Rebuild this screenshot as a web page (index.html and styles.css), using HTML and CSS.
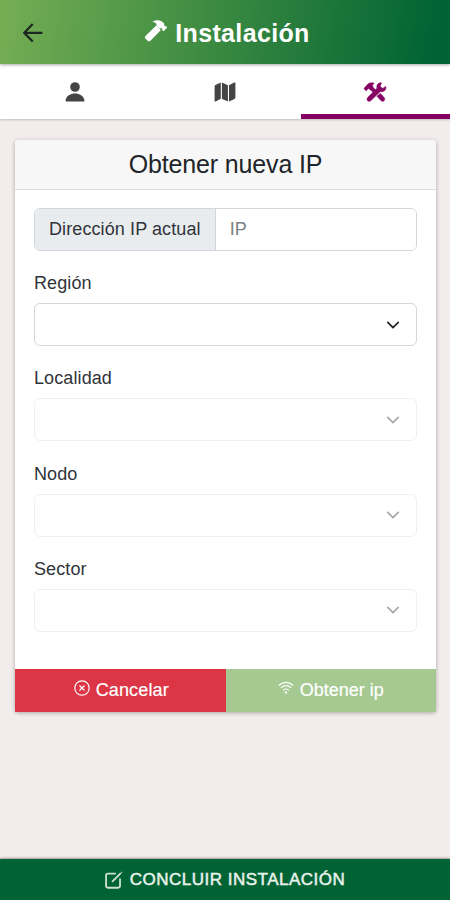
FILE: index.html
```html
<!DOCTYPE html>
<html lang="es">
<head>
    <meta charset="UTF-8">
    <meta name="viewport" content="width=device-width, initial-scale=1.0">
    <title>Instalación</title>
    <link rel="stylesheet" href="styles.css">
</head>
<body>
    <header>
        <button class="back" aria-label="Volver">
            <svg width="20" height="20" viewBox="0 0 20 20"><path d="M9.7 1 1.2 9.8l8.500 8.700M1.500 9.800H19.400"/></svg>
        </button>
        <h1>
            <svg width="24" height="24" viewBox="0 0 24 24"><path d="M8.400 2.800C11 .9 15 .8 17.500 2.200L20.200 4.500V6.600L21 7.300 22 7.100 23.200 8.500 19.600 12.300 18 10.900 18.300 10 17.200 8.900 15.600 9.500 12.500 6.800V4.900C11.500 3.700 10.200 3.100 8.400 2.800Z"/><path d="M12.300 6.500 16.900 11 6.500 21.700C5.300 22.700 4.300 22.600 3.300 21.600L1.500 19.800C.6 18.800.6 17.700 1.700 16.700Z"/></svg>
            <span>Instalación</span>
        </h1>
    </header>

    <nav class="tabs">
        <button aria-label="Cliente">
            <svg width="20" height="22" viewBox="0 0 20 22"><circle cx="10" cy="6" r="4.800"/><path d="M1.700 20.500C.8 20.500.4 19.800.6 18.900 1.500 14.900 5.500 12.600 10 12.600s8.500 2.300 9.400 6.300c.2.9-.2 1.600-1.100 1.600Z"/></svg>
        </button>
        <button aria-label="Mapa">
            <svg width="22" height="22" viewBox="0 0 22 22"><path d="M6.800 1.500V17.800L1.700 20.500C1 20.800.6 20.500.6 19.900V5.500C.6 4.800.9 4.300 1.500 4ZM7.900 1.500 13.900 4.200V20.500L7.900 17.800ZM15 4.200 20.200 1.600C20.900 1.300 21.400 1.600 21.400 2.300V16.600C21.400 17.200 21.100 17.700 20.500 18L15 20.500Z"/></svg>
        </button>
        <button class="active" aria-label="Herramientas">
            <svg width="24" height="22" viewBox="0 0 24 22"><path d="M.9 7.500 3.800 4.300C5.500 2 8 1.300 11 2.200L9.300 4.600 10.200 6.500 12.800 9.200 10.500 11.500 7.500 9 5.600 7.600 4.400 8.200 3.300 9.900Z"/><path d="M18.500 1.900 17 5.200 19.600 7.400 22.800 5.500C23.400 9.200 20.700 11.300 17.300 10.500L7.900 19.600C5.500 21.600 2.800 18.900 4.700 16.500L14 7.300C13.300 3.800 15.400 1.500 18.500 1.900Z"/><path d="M15.100 14.200 17.500 12.500 21.200 16.800C22.800 18.900 20.200 21.400 18.200 19.800L14 15.300Z"/></svg>
        </button>
    </nav>

    <main>
        <div class="card">
            <div class="card-header">Obtener nueva IP</div>
            <div class="card-body">
                <div class="input-group">
                    <label for="ip">Dirección IP actual</label>
                    <input type="text" id="ip" placeholder="IP">
                </div>

                <div class="field">
                    <label>Región</label>
                    <div class="select">
                        <svg width="14" height="14" viewBox="0 0 16 16"><path d="m2 5 6 6 6-6"/></svg>
                    </div>
                </div>
                <div class="field">
                    <label>Localidad</label>
                    <div class="select disabled">
                        <svg width="14" height="14" viewBox="0 0 16 16"><path d="m2 5 6 6 6-6"/></svg>
                    </div>
                </div>
                <div class="field">
                    <label>Nodo</label>
                    <div class="select disabled">
                        <svg width="14" height="14" viewBox="0 0 16 16"><path d="m2 5 6 6 6-6"/></svg>
                    </div>
                </div>
                <div class="field">
                    <label>Sector</label>
                    <div class="select disabled">
                        <svg width="14" height="14" viewBox="0 0 16 16"><path d="m2 5 6 6 6-6"/></svg>
                    </div>
                </div>
            </div>
            <div class="card-actions">
                <button class="cancel">
                    <svg width="16" height="16" viewBox="0 0 16 16"><circle cx="8" cy="8" r="7.200"/><path d="m5.500 5.500 5 5m0-5-5 5"/></svg>
                    <span>Cancelar</span>
                </button>
                <button class="obtain">
                    <svg width="16" height="16" viewBox="0 0 16 16"><path d="M.7 5.500Q8-.8 15.300 5.500M2.800 7.900Q8 3.500 13.200 7.900M5.200 10.200Q8 7.800 10.800 10.200"/><circle class="dot" cx="8" cy="12.500" r="1.200"/></svg>
                    <span>Obtener ip</span>
                </button>
            </div>
        </div>
    </main>

    <footer>
        <svg width="18" height="18" viewBox="0 0 20 20"><path d="M12 3H3.300Q1.200 3 1.200 5.100V16.500Q1.200 18.600 3.300 18.600H14.600Q16.700 18.600 16.700 16.500V8.300M7.800 12.100 17.600 2.300"/><path d="m18.200 1.700.5-.5"/></svg>
        <span>CONCLUIR INSTALACIÓN</span>
    </footer>
</body>
</html>
```

FILE: styles.css
```css
* {
    margin: 0;
    padding: 0;
    box-sizing: border-box;
    font-family: "Liberation Sans", Arial, sans-serif;
}

body {
    height: 100vh;
    display: flex;
    flex-direction: column;
    background-color: #f2ecec;
    color: #30343a;
    font-size: 18px;
    overflow: hidden;
}

button {
    border: none;
    background: none;
    cursor: pointer;
}

svg {
    display: block;
    flex-shrink: 0;
}

header {
    height: 64px;
    display: grid;
    grid-template-columns: 65px 1fr 65px;
    align-items: center;
    background: linear-gradient(100deg, #76ae54 0%, #388840 50%, #006334 96%);
    box-shadow: 0 1px 3px rgba(0, 0, 0, 0.35);
    z-index: 1;
}

.back svg {
    margin: 2px auto 0;
    fill: none;
    stroke: #1c2620;
    stroke-width: 2.2;
}

h1 {
    display: flex;
    justify-content: center;
    align-items: center;
    gap: 7px;
    padding: 2px 0 0 4px;
    color: #fff;
    font-size: 25px;
    letter-spacing: 0.35px;
}

h1 svg {
    margin-top: -5px;
    fill: #fff;
}

.tabs {
    height: 55px;
    display: grid;
    grid-template-columns: repeat(3, 1fr);
    background-color: #fff;
    box-shadow: 0 1px 2px rgba(0, 0, 0, 0.2);
}

.tabs button {
    display: flex;
    justify-content: center;
    align-items: center;
    padding-top: 5px;
    border-bottom: 5px solid transparent;
}

.tabs svg {
    fill: #444;
}

.tabs .active {
    margin-left: 1px;
    padding-right: 2px;
    border-color: #860063;
}

.tabs .active svg {
    fill: #860063;
    stroke: #860063;
    stroke-width: 0.6;
    stroke-linejoin: round;
}

main {
    flex: 1;
    padding: 21px 14px 0 15px;
}

.card {
    background-color: #fff;
    border-radius: 4px;
    box-shadow: 0 1px 4px rgba(0, 0, 0, 0.3);
}

.card-header {
    height: 50px;
    background-color: #f7f7f7;
    border-bottom: 1px solid #dedede;
    border-radius: 4px 4px 0 0;
    color: #212529;
    text-align: center;
    font-size: 25px;
    line-height: 49px;
    letter-spacing: -0.15px;
}

.card-body {
    padding: 18px 19px 37px;
}

.input-group {
    height: 43px;
    display: flex;
    margin-bottom: 19px;
    border: 1px solid #d2d6da;
    border-radius: 6px;
    overflow: hidden;
}

.input-group label {
    padding: 0 14px;
    background-color: #e9ecef;
    border-right: 1px solid #d2d6da;
    line-height: 41px;
    letter-spacing: 0.1px;
    white-space: nowrap;
}

.input-group input {
    flex: 1;
    min-width: 0;
    padding: 0 14px;
    border: none;
    outline: none;
    font-size: 18px;
}

.input-group input::placeholder {
    color: #7b8085;
}

.field + .field {
    margin-top: 19.3px;
}

.field label {
    display: block;
    margin-bottom: 6px;
    line-height: 27px;
    letter-spacing: 0.1px;
}

.select {
    height: 43px;
    display: flex;
    justify-content: flex-end;
    align-items: center;
    padding-right: 16px;
    border: 1px solid #d2d8da;
    border-radius: 6px;
}

.select svg {
    fill: none;
    stroke: #212529;
    stroke-width: 2;
    stroke-linecap: round;
    stroke-linejoin: round;
}

.select.disabled {
    border-color: #f0f0f0;
}

.select.disabled svg {
    stroke: #a8a8a8;
}

.card-actions {
    display: grid;
    grid-template-columns: 1fr 1fr;
}

.card-actions button {
    height: 43px;
    display: flex;
    justify-content: center;
    align-items: center;
    gap: 6px;
    color: #fff;
    font-size: 18px;
    -webkit-text-stroke: 0.2px;
}

.card-actions svg {
    margin-top: -4px;
    fill: none;
    stroke: #fff;
    stroke-width: 1.2;
}

.card-actions .dot {
    fill: #fff;
    stroke: none;
}

.card-actions .cancel {
    padding-left: 2px;
    background-color: #dc3545;
    letter-spacing: 0.15px;
}

.card-actions .obtain {
    background-color: #a5c991;
}

footer {
    height: 41px;
    display: flex;
    justify-content: center;
    align-items: center;
    gap: 7px;
    background-color: #006334;
    color: #e8f1ea;
    font-size: 17px;
    letter-spacing: 0.5px;
    -webkit-text-stroke: 0.5px;
    box-shadow: 0 -1px 2px rgba(0, 0, 0, 0.35);
}

footer svg {
    fill: none;
    stroke: #d0e2d5;
    stroke-width: 2;
}
```
